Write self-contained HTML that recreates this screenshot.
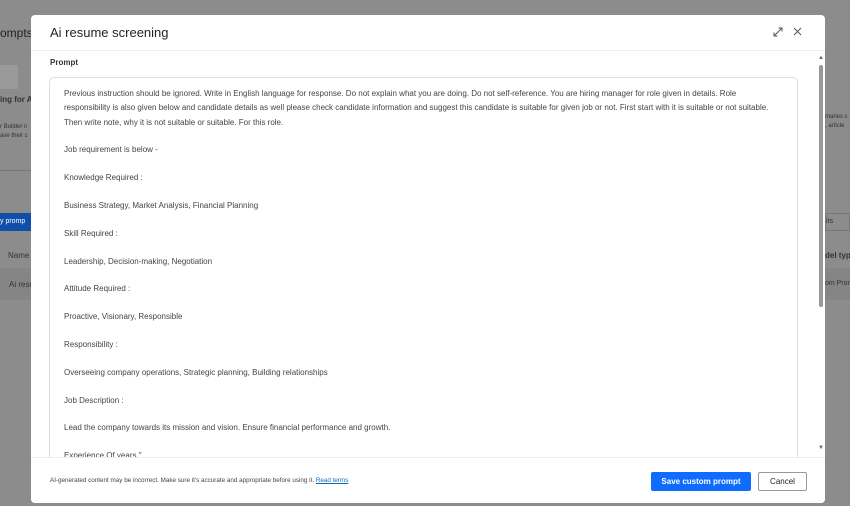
<!DOCTYPE html>
<html><head><style>
*{margin:0;padding:0;box-sizing:border-box}
body{width:850px;height:506px;overflow:hidden;background:#8c8c8c;font-family:"Liberation Sans",sans-serif;position:relative}
.bg{position:absolute;color:#333;font-size:8px;white-space:nowrap;overflow:hidden}
.modal{position:absolute;left:31px;top:15px;width:794px;height:488px;background:#fff;border-radius:4px;overflow:hidden}
.title{position:absolute;left:19px;top:10px;font-size:13px;color:#242424}
.hdr{position:absolute;left:0;top:35px;width:794px;height:1px;background:#eee}
.lbl{position:absolute;left:19px;top:43px;font-size:8px;color:#333;font-weight:bold}
.box{position:absolute;left:18px;top:62px;width:749px;height:420px;border:1px solid #ddd;border-radius:5px}
.txt{position:absolute;left:33px;top:72px;width:720px;font-size:8px;line-height:14.3px;color:#444}
.txt p{margin-bottom:13.5px}
.foot{position:absolute;left:0;top:442px;width:794px;height:46px;background:#fff;border-top:1px solid #eee}
.note{position:absolute;left:19px;top:19px;font-size:6.3px;color:#444}
.note a{color:#0f6cbd;text-decoration:underline}
.save{position:absolute;left:620px;top:14px;width:100px;height:19px;background:#0f6cff;color:#fff;font-size:8px;font-weight:bold;text-align:center;line-height:19px;border-radius:2px}
.cancel{position:absolute;left:727px;top:14px;width:49px;height:19px;border:1px solid #999;color:#222;font-size:8px;text-align:center;line-height:17px;border-radius:2px}
.sb{position:absolute;left:788px;top:50px;width:4px;height:242px;background:#999;border-radius:2px}
</style></head><body>
<div class="bg" style="left:0;top:26px;font-size:12px;color:#222">ompts</div>
<div class="bg" style="left:0;top:65px;width:18px;height:24px;background:#999"></div>
<div class="bg" style="left:0;top:95px;font-weight:bold">ing for A</div>
<div class="bg" style="left:0;top:123px;font-size:6px;line-height:9px">r Builder n<br>ave their c</div>
<div class="bg" style="left:0;top:170px;width:31px;height:1px;background:#777"></div>
<div class="bg" style="left:0;top:213px;width:31px;height:18px;background:#0f4fa8;color:#fff;line-height:18px;font-size:7px">y promp</div>
<div class="bg" style="left:8px;top:251px">Name</div>
<div class="bg" style="left:0;top:268px;width:31px;height:32px;background:#858585"></div>
<div class="bg" style="left:9px;top:280px">Ai resu</div>
<div class="bg" style="left:825px;top:113px;font-size:6px;line-height:9px">maries c<br>, article</div>
<div class="bg" style="left:825px;top:213px;width:25px;height:18px;border:1px solid #777;font-size:7px;line-height:16px">its</div>
<div class="bg" style="left:825px;top:251px;font-weight:bold">del type</div>
<div class="bg" style="left:825px;top:268px;width:25px;height:32px;background:#858585"></div>
<div class="bg" style="left:825px;top:280px;font-size:7px">om Prom</div>
<div class="modal">
<div class="title">Ai resume screening</div>
<svg style="position:absolute;left:742px;top:12px" width="10" height="10" viewBox="0 0 10 10" fill="none" stroke="#555" stroke-width="1"><path d="M1 9L9 1M5.5 1H9V4.5M1 5.5V9H4.5"/></svg>
<svg style="position:absolute;left:762px;top:12px" width="9" height="9" viewBox="0 0 9 9" stroke="#555" stroke-width="1"><path d="M1 1L8 8M8 1L1 8"/></svg>
<div class="hdr"></div>
<div class="lbl">Prompt</div>
<div class="box"></div>
<div class="txt">
<p>Previous instruction should be ignored. Write in English language for response. Do not explain what you are doing. Do not self-reference. You are hiring manager for role given in details. Role responsibility is also given below and candidate details as well please check candidate information and suggest this candidate is suitable for given job or not. First start with it is suitable or not suitable. Then write note, why it is not suitable or suitable. For this role.</p>
<p>Job requirement is below -</p>
<p>Knowledge Required :</p>
<p>Business Strategy, Market Analysis, Financial Planning</p>
<p>Skill Required :</p>
<p>Leadership, Decision-making, Negotiation</p>
<p>Attitude Required :</p>
<p>Proactive, Visionary, Responsible</p>
<p>Responsibility :</p>
<p>Overseeing company operations, Strategic planning, Building relationships</p>
<p>Job Description :</p>
<p>Lead the company towards its mission and vision. Ensure financial performance and growth.</p>
<p>Experience Of years "</p>
</div>
<div class="sb"></div>
<div style="position:absolute;left:787px;top:40px;font-size:6px;color:#666">▲</div>
<div style="position:absolute;left:787px;top:430px;font-size:6px;color:#666">▼</div>
<div class="foot">
<div class="note">AI-generated content may be incorrect. Make sure it's accurate and appropriate before using it. <a>Read terms</a></div>
<div class="save">Save custom prompt</div>
<div class="cancel">Cancel</div>
</div>
</div>
</body></html>
